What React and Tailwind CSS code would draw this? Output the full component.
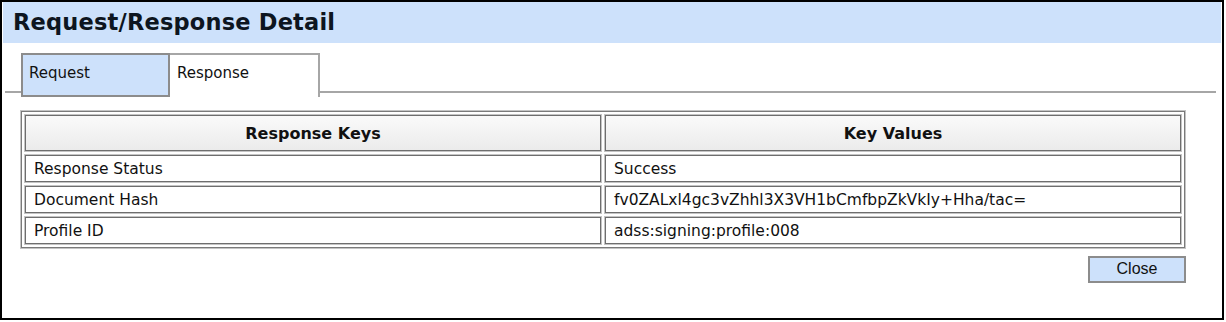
export default function App() {
  const rows = [
    ["Response Status", "Success"],
    ["Document Hash", "fv0ZALxl4gc3vZhhl3X3VH1bCmfbpZkVkIy+Hha/tac="],
    ["Profile ID", "adss:signing:profile:008"],
  ];
  const cell = "border border-[#6e6e6e] shadow-[0_0_0_1px_#c4c4c4] bg-white h-[27px] flex items-center pl-[8px] pt-[2px] text-[15.5px] text-[#111]";
  return (
    <div className="w-[1224px] h-[320px] border-2 border-black bg-white px-px flex flex-col" style={{ fontFamily: '"DejaVu Sans", Verdana, sans-serif' }}>
      <div className="h-[41px] bg-[#cde1fb] flex items-center pl-[10px]">
        <h1 className="text-[22.5px] font-bold text-[#0d1520] leading-none tracking-[0.2px]">Request/Response Detail</h1>
      </div>
      <div className="ml-[2px] mr-[5px] h-[50px] border-b-2 border-[#a6a6a6] flex items-start pt-[10px] pl-[16px]">
        <div className="w-[149px] h-[44px] bg-[#cde1fb] border-2 border-[#8c8c8c] pl-[6px] pt-[7px] text-[15px] text-[#111] relative z-10">Request</div>
        <div className="w-[150px] h-[44px] bg-white border-2 border-b-0 border-l-0 border-[#a6a6a6] pl-[7px] pt-[7px] text-[15px] text-[#111] relative z-10">Response</div>
      </div>
      <div className="ml-[18px] mt-[18px] w-[1164px] border border-[#7a7a7a] shadow-[0_0_0_1px_#c4c4c4] p-[3px] grid grid-cols-2 gap-[4px]">
        <div className="border border-[#6e6e6e] shadow-[0_0_0_1px_#c4c4c4] h-[36px] pt-[1px] bg-gradient-to-b from-[#fafafa] to-[#ebebeb] flex items-center justify-center text-[16px] font-bold text-[#111]">Response Keys</div>
        <div className="border border-[#6e6e6e] shadow-[0_0_0_1px_#c4c4c4] h-[36px] pt-[1px] bg-gradient-to-b from-[#fafafa] to-[#ebebeb] flex items-center justify-center text-[16px] font-bold text-[#111]">Key Values</div>
        {rows.map(([k, v]) => (
          <>
            <div key={k} className={cell}>{k}</div>
            <div key={k + "v"} className={cell}>{v}</div>
          </>
        ))}
      </div>
      <div className="w-[1183px] flex justify-end mt-[8px]">
        <button className="w-[98px] h-[27px] bg-[#cde1fb] border-2 border-[#8c8c8c] text-[16px] text-[#111] flex items-center justify-center pb-[1px]" style={{ fontFamily: '"Liberation Sans", Arial, sans-serif' }}>Close</button>
      </div>
    </div>
  );
}
